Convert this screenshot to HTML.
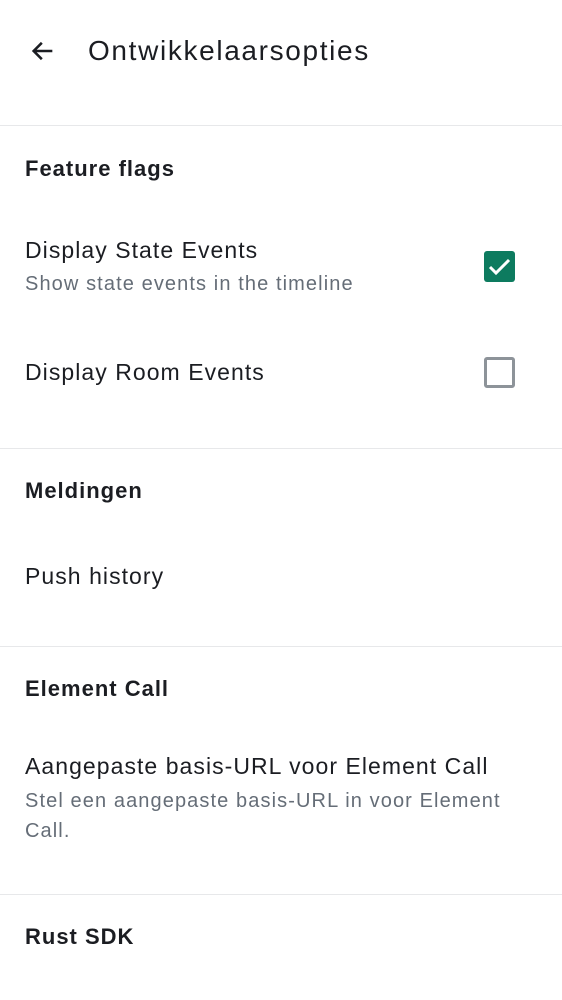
<!DOCTYPE html>
<html><head><meta charset="utf-8"><style>
body{margin:0;width:562px;height:1000px;background:#fff;position:relative;overflow:hidden;font-family:"Liberation Sans",sans-serif;color:#1b1d22}
.t{position:absolute;left:25px;line-height:1;white-space:nowrap}
.h{font-size:22px;font-weight:bold;letter-spacing:1px}
.i{font-size:23px;letter-spacing:1.05px}
.s{font-size:20px;color:#656d77;letter-spacing:1.1px}
.d{position:absolute;left:0;width:562px;height:1px;background:#e7e8ea}
</style></head><body>
<svg style="position:absolute;left:29px;top:37px" width="28" height="28" viewBox="0 0 24 24"><path d="M20 12H5M11 5l-7 7 7 7" fill="none" stroke="#1b1d22" stroke-width="2.2"/></svg>
<div class="t" style="left:88px;top:37px;font-size:28px;letter-spacing:1.65px">Ontwikkelaarsopties</div>
<div class="d" style="top:125px"></div>
<div class="t h" style="top:158px">Feature flags</div>
<div class="t i" style="top:239px">Display State Events</div>
<div class="t s" style="top:274px">Show state events in the timeline</div>
<div style="position:absolute;left:484px;top:251px;width:31px;height:31px;background:#0d7b5f;border-radius:3px"></div>
<svg style="position:absolute;left:484px;top:251px" width="31" height="31" viewBox="0 0 31 31"><path d="M6 16l6 6 13-13" fill="none" stroke="#fff" stroke-width="3"/></svg>
<div class="t i" style="top:361px">Display Room Events</div>
<div style="position:absolute;left:484px;top:357px;width:25px;height:25px;border:3px solid #8d9399;border-radius:3px"></div>
<div class="d" style="top:448px"></div>
<div class="t h" style="top:480px">Meldingen</div>
<div class="t i" style="top:565px">Push history</div>
<div class="d" style="top:646px"></div>
<div class="t h" style="top:678px">Element Call</div>
<div class="t i" style="top:755px">Aangepaste basis-URL voor Element Call</div>
<div class="t s" style="top:791px">Stel een aangepaste basis-URL in voor Element</div>
<div class="t s" style="top:821px">Call.</div>
<div class="d" style="top:894px"></div>
<div class="t h" style="top:926px">Rust SDK</div>
</body></html>
